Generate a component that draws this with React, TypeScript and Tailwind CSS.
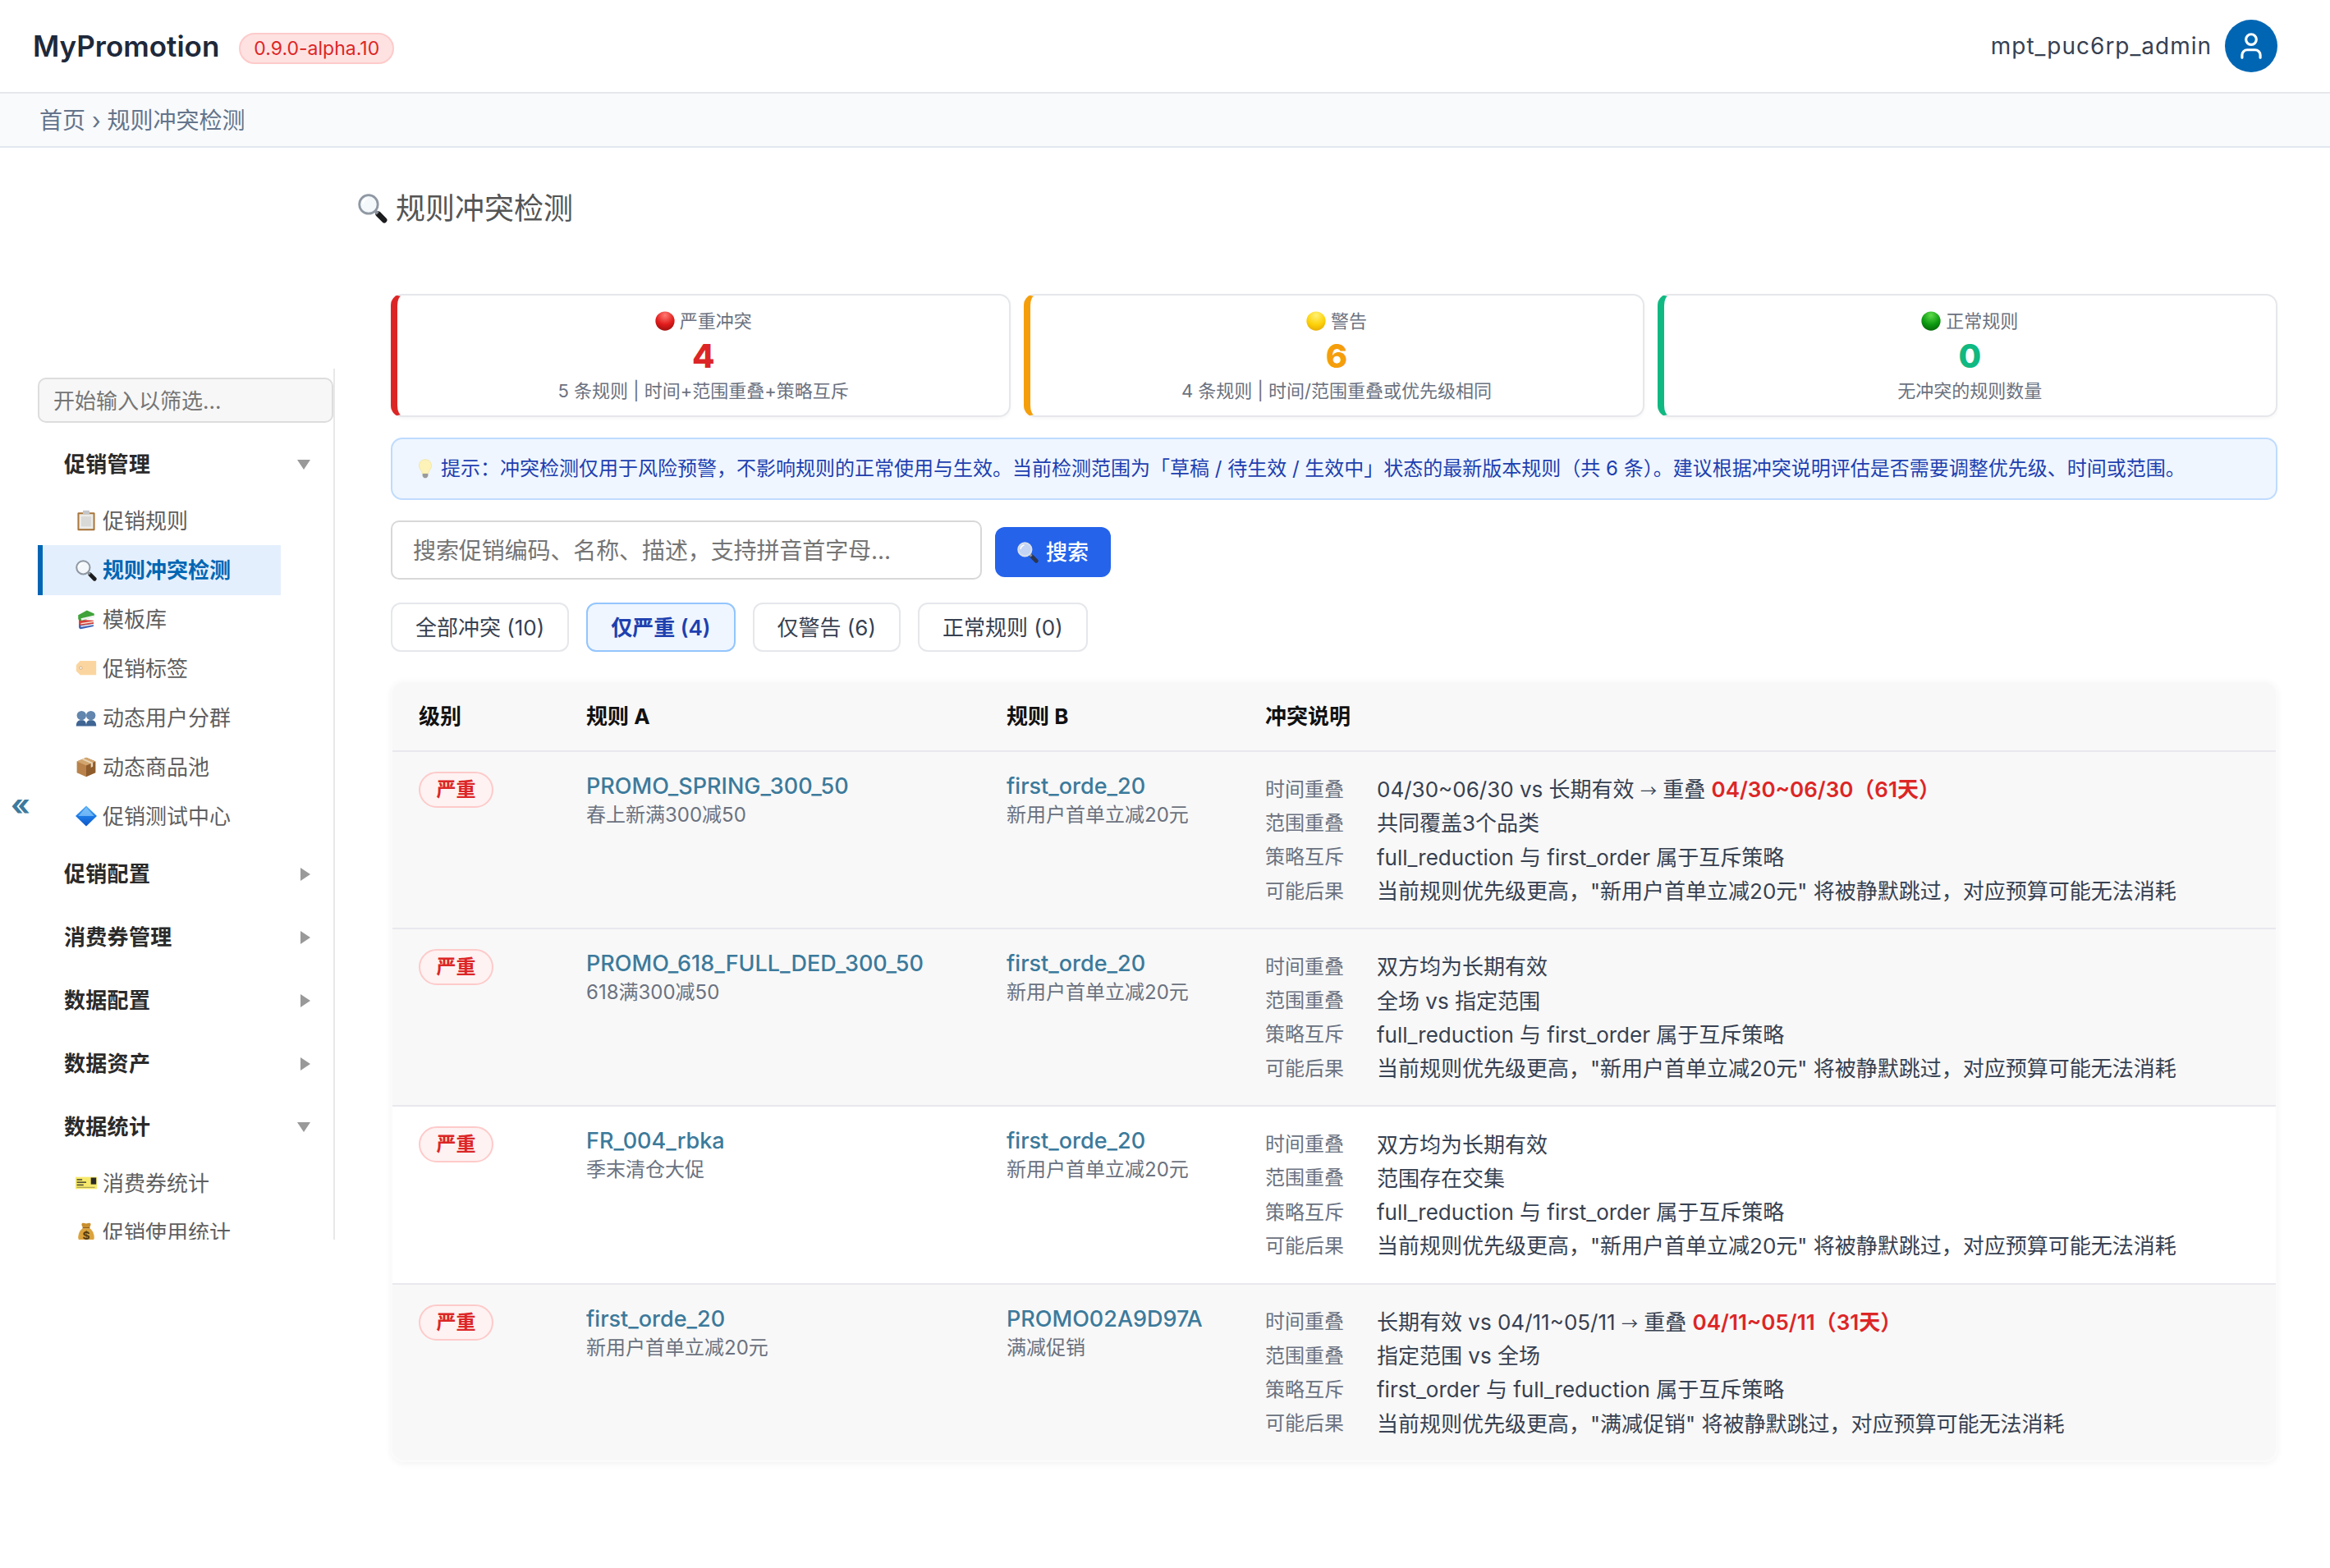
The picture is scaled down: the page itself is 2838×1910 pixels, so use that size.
import React from "react";
import { User } from "lucide-react";

type IconName = "search" | "searchLight" | "clipboard" | "books" | "tag" | "users" | "box" | "diamond" | "ticket" | "bag" | "red" | "yellow" | "green" | "bulb";

function Icon({ name, className }: { name: IconName; className?: string }) {
  const common = { viewBox: "0 0 32 32", className };
  switch (name) {
    case "search":
    case "searchLight":
      return (
        <svg {...common}>
          <path d="M22 22l6.500 6.500" fill="none" stroke={name === "search" ? "#1c1c1e" : "#2b3550"} strokeWidth="6" strokeLinecap="round" />
          <path d="M18 18l3.500 3.500" fill="none" stroke="#8a8f98" strokeWidth="3.500" />
          <circle cx="11.500" cy="11.500" r="10" fill={name === "search" ? "#f4f8fb" : "#c3d4f5"} stroke={name === "search" ? "#8f98a3" : "#d9e0ea"} strokeWidth="2.500" />
          <path d="M5 11a7 7 0 0 1 5.500-6" fill="none" stroke="#fff" strokeWidth="2" />
        </svg>
      );
    case "clipboard":
      return (
        <svg {...common}>
          <rect x="3" y="4" width="26" height="27" rx="1.500" fill="#a9763c" />
          <rect x="5.500" y="6.500" width="21" height="22" fill="#ececea" />
          <rect x="11" y="1" width="10" height="5.500" rx="1" fill="#c2c5c9" />
          <rect x="8.500" y="10" width="15" height="15" fill="#d9d9d7" />
        </svg>
      );
    case "books":
      return (
        <svg {...common}>
          <path d="M5 23l22-2v6L8 31c-2 0-3-1-3-3z" fill="#3c63b8" />
          <path d="M27 23l-19 3v2l19-3z" fill="#f0f0f0" />
          <path d="M5 17l22 1v5L8 25.500c-2 0-3-1.500-3-4z" fill="#d8403a" />
          <path d="M27 19l-19 3v2l19-3z" fill="#f3e6d8" />
          <path d="M4 10L17 3l11 5v4L12 18c-4 1-8 0-8-3z" fill="#3fa33a" />
          <path d="M8 15l20-4.500v3L9 18z" fill="#f3f3f3" />
        </svg>
      );
    case "tag":
      return (
        <svg {...common}>
          <path d="M7 5h24v21H7L1 20v-9z" fill="#fbd5a0" />
          <circle cx="8" cy="15.500" r="2" fill="#fff" stroke="#b98f5c" strokeWidth="0.800" />
        </svg>
      );
    case "users":
      return (
        <svg {...common}>
          <circle cx="9" cy="13" r="7" fill="#6286ad" />
          <path d="M1 29c0-7 3-9 8-9s7 2 7 9z" fill="#3f6594" />
          <circle cx="23" cy="13" r="7" fill="#6286ad" />
          <path d="M16 29c0-7 2-9 7-9s8 2 8 9z" fill="#3f6594" />
        </svg>
      );
    case "box":
      return (
        <svg {...common}>
          <path d="M16 2l14 6v17l-14 6z" fill="#8f5c2c" />
          <path d="M16 2L2 8v17l14 6z" fill="#b8824a" />
          <path d="M16 14L2 8l14-6 14 6z" fill="#d2a56e" />
          <path d="M9 5l14 6.200v6l3-1.400v-6L12 3.800z" fill="#e8d6ba" />
        </svg>
      );
    case "diamond":
      return (
        <svg {...common}>
          <defs>
            <linearGradient id="dg" x1="0" y1="0" x2="0" y2="1">
              <stop offset="0" stopColor="#5bb1f7" />
              <stop offset="0.5" stopColor="#1c7be6" />
              <stop offset="1" stopColor="#0f55c8" />
            </linearGradient>
          </defs>
          <path d="M16 0.500L32 16 16 31.500 0 16z" fill="url(#dg)" />
          <path d="M16 3L4 16h24z" fill="#8ccbfb" opacity="0.700" />
        </svg>
      );
    case "ticket":
      return (
        <svg {...common}>
          <rect x="0" y="7" width="32" height="18" fill="#f6e96a" />
          <rect x="23" y="8" width="8" height="10" fill="#2b2b2b" />
          <rect x="2" y="10" width="8" height="2" fill="#55533a" />
          <rect x="2" y="14" width="14" height="2" fill="#55533a" />
          <rect x="2" y="18" width="10" height="2" fill="#55533a" />
          <rect x="2" y="22" width="27" height="1" fill="#8e8a52" />
        </svg>
      );
    case "bag":
      return (
        <svg {...common}>
          <path d="M11 9C7 2 10 1 16 3c6-2 9-1 5 6z" fill="#c98f2e" />
          <path d="M11 8.500h10l1 2H10z" fill="#8e5e18" />
          <path d="M11 10C6 13 4 19 4 24c0 5 5 7 12 7s12-2 12-7c0-5-2-11-7-14z" fill="#dca33c" />
          <text x="16" y="27" textAnchor="middle" fontSize="17" fontWeight="700" fill="#5b3c10" fontFamily="Inter, sans-serif">$</text>
        </svg>
      );
    case "red":
    case "yellow":
    case "green": {
      const c = { red: ["#ff7b72", "#e01b1b", "#8f0c0c"], yellow: ["#fff176", "#fdd20a", "#e2a300"], green: ["#5edb4a", "#0c9a10", "#045c07"] }[name];
      return (
        <svg {...common}>
          <defs>
            <radialGradient id={"g" + name} cx="0.5" cy="0.2" r="0.9">
              <stop offset="0" stopColor={c[0]} />
              <stop offset="0.55" stopColor={c[1]} />
              <stop offset="1" stopColor={c[2]} />
            </radialGradient>
          </defs>
          <circle cx="16" cy="16" r="15.500" fill={"url(#g" + name + ")"} />
        </svg>
      );
    }
    case "bulb":
      return (
        <svg {...common}>
          <path d="M16 1c-6 0-10 4.500-10 10 0 4 2.500 6.500 4 9 .7 1.200 1 2.500 1 3.500h10c0-1 .3-2.300 1-3.500 1.500-2.500 4-5 4-9 0-5.500-4-10-10-10z" fill="#fdf3b8" stroke="#f0dc8a" strokeWidth="0.800" />
          <path d="M11.500 24h9v4l-2.500 3h-4l-2.500-3z" fill="#9a9a9a" />
        </svg>
      );
  }
}

function Triangle({ open }: { open: boolean }) {
  return open ? (
    <svg viewBox="0 0 16 12" className="w-[16px] h-[12px] ml-auto mr-[28px] shrink-0">
      <path d="M0 0h16L8 12z" fill="#999999" />
    </svg>
  ) : (
    <svg viewBox="0 0 12 16" className="w-[12px] h-[16px] ml-auto mr-[28px] shrink-0">
      <path d="M0 0l12 8-12 8z" fill="#999999" />
    </svg>
  );
}

function Group({ label, open }: { label: string; open: boolean }) {
  return (
    <div className="h-[77px] flex items-center pl-[32px] text-[26px] tracking-[0.3px] font-bold text-[#2a2a2a]">
      <span>{label}</span>
      <Triangle open={open} />
    </div>
  );
}

function Item({ icon, label, active }: { icon: IconName; label: string; active?: boolean }) {
  return (
    <div
      className={
        active
          ? "h-[61px] -mb-px w-[296px] flex items-center border-l-[6px] border-[#0066b3] bg-[#e4effd] pl-[40px] text-[26px] font-bold text-[#0066b3]"
          : "h-[60px] w-[296px] flex items-center pl-[46px] text-[26px] text-[#5f5f5f]"
      }
    >
      <Icon name={icon} className="w-[26px] h-[26px] mr-[7px] shrink-0" />
      <span>{label}</span>
    </div>
  );
}

function Sidebar() {
  return (
    <aside className="w-[408px] shrink-0 pl-[46px] pt-[269px]">
      <div className="h-[1061px] overflow-hidden border-r-2 border-[#e8e8e8] pt-[11px]">
        <input
          placeholder="开始输入以筛选..."
          className="block w-[360px] h-[55px] rounded-[10px] border-2 border-[#dddddd] bg-[#f7f7f7] pl-[17px] pt-[2px] text-[26px] placeholder:text-[#757575] outline-none"
        />
        <div className="mt-[12px]">
          <Group label="促销管理" open />
          <Item icon="clipboard" label="促销规则" />
          <Item icon="search" label="规则冲突检测" active />
          <Item icon="books" label="模板库" />
          <Item icon="tag" label="促销标签" />
          <Item icon="users" label="动态用户分群" />
          <Item icon="box" label="动态商品池" />
          <Item icon="diamond" label="促销测试中心" />
        </div>
        <div className="mt-[2px]">
          <Group label="促销配置" open={false} />
          <Group label="消费券管理" open={false} />
          <Group label="数据配置" open={false} />
          <Group label="数据资产" open={false} />
          <Group label="数据统计" open />
          <Item icon="ticket" label="消费券统计" />
          <Item icon="bag" label="促销使用统计" />
        </div>
      </div>
    </aside>
  );
}

const statCards: { icon: IconName; label: string; value: string; sub: string; border: string; text: string }[] = [
  { icon: "red", label: "严重冲突", value: "4", sub: "5 条规则 | 时间+范围重叠+策略互斥", border: "border-l-[#dc2626]", text: "text-[#dc2626]" },
  { icon: "yellow", label: "警告", value: "6", sub: "4 条规则 | 时间/范围重叠或优先级相同", border: "border-l-[#f59e0b]", text: "text-[#f59e0b]" },
  { icon: "green", label: "正常规则", value: "0", sub: "无冲突的规则数量", border: "border-l-[#10b981]", text: "text-[#10b981]" },
];

function StatCard({ icon, label, value, sub, border, text }: (typeof statCards)[number]) {
  return (
    <div className={"h-[150px] rounded-[14px] border-2 border-l-[8px] border-[#e5e7eb] bg-white pt-[15px] flex flex-col items-center shadow-[0_2px_4px_rgba(0,0,0,0.04)] " + border}>
      <div className="h-[32px] flex items-center gap-[6px] text-[22px] leading-[32px] text-[#6b7280]">
        <Icon name={icon} className="w-[24px] h-[24px]" />
        <span>{label}</span>
      </div>
      <div className={"mt-[3px] h-[48px] text-[40px] leading-[48px] font-extrabold " + text}>{value}</div>
      <div className="mt-[2px] h-[32px] text-[22px] leading-[32px] text-[#6b7280]">{sub}</div>
    </div>
  );
}

const chips = [
  { label: "全部冲突 (10)" },
  { label: "仅严重 (4)", active: true },
  { label: "仅警告 (6)" },
  { label: "正常规则 (0)" },
];

const longBudget = "当前规则优先级更高，\"新用户首单立减20元\" 将被静默跳过，对应预算可能无法消耗";
const mutex = "full_reduction 与 first_order 属于互斥策略";

type Row = {
  a: string;
  aSub: string;
  b: string;
  bSub: string;
  white?: boolean;
  lines: React.ReactNode[];
};

const arrow = <span className="font-['Noto_Sans_CJK_SC'] text-[20px]">→</span>;

const rows: Row[] = [
  {
    a: "PROMO_SPRING_300_50",
    aSub: "春上新满300减50",
    b: "first_orde_20",
    bSub: "新用户首单立减20元",
    lines: [
      <>04/30~06/30 vs 长期有效 {arrow} 重叠 <span className="font-semibold text-[#dc2626]">04/30~06/30（61天）</span></>,
      "共同覆盖3个品类",
      mutex,
      longBudget,
    ],
  },
  {
    a: "PROMO_618_FULL_DED_300_50",
    aSub: "618满300减50",
    b: "first_orde_20",
    bSub: "新用户首单立减20元",
    lines: ["双方均为长期有效", "全场 vs 指定范围", mutex, longBudget],
  },
  {
    a: "FR_004_rbka",
    aSub: "季末清仓大促",
    b: "first_orde_20",
    bSub: "新用户首单立减20元",
    white: true,
    lines: ["双方均为长期有效", "范围存在交集", mutex, longBudget],
  },
  {
    a: "first_orde_20",
    aSub: "新用户首单立减20元",
    b: "PROMO02A9D97A",
    bSub: "满减促销",
    lines: [
      <>长期有效 vs 04/11~05/11 {arrow} 重叠 <span className="font-semibold text-[#dc2626]">04/11~05/11（31天）</span></>,
      "指定范围 vs 全场",
      "first_order 与 full_reduction 属于互斥策略",
      "当前规则优先级更高，\"满减促销\" 将被静默跳过，对应预算可能无法消耗",
    ],
  },
];

const lineLabels = ["时间重叠", "范围重叠", "策略互斥", "可能后果"];

function RuleCell({ name, sub }: { name: string; sub: string }) {
  return (
    <div>
      <div className="mt-[1px] h-[34px] text-[27px] leading-[34px] font-medium text-[#3c7a9b]">{name}</div>
      <div className="mt-[1px] h-[34px] text-[24px] leading-[34px] text-[#6b7280]">{sub}</div>
    </div>
  );
}

function TableRow({ row, last }: { row: Row; last: boolean }) {
  return (
    <div className={"grid grid-cols-[236px_512px_315px_1fr] py-[24px] " + (row.white ? "bg-white " : "bg-[#f8f8f8] ") + (last ? "" : "border-b-2 border-[#e8e8ee]")}>
      <div className="pl-[32px]">
        <span className="flex h-[44px] w-[91px] items-center justify-center rounded-[22px] border-2 border-[#fecaca] bg-[#fef2f2] text-[24px] font-semibold text-[#dc2626]">严重</span>
      </div>
      <RuleCell name={row.a} sub={row.aSub} />
      <RuleCell name={row.b} sub={row.bSub} />
      <div className="pt-[1px]">
        {row.lines.map((line, i) => (
          <div key={i} className="flex h-[41.3px] items-center">
            <span className="w-[136px] shrink-0 text-[24px] text-[#6b7280]">{lineLabels[i]}</span>
            <span className="text-[26px] text-[#374151]">{line}</span>
          </div>
        ))}
      </div>
    </div>
  );
}

export default function App() {
  return (
    <div className="min-h-[1910px] bg-white font-['Inter','Noto_Sans_CJK_SC',sans-serif]">
      <header className="h-[114px] border-b-2 border-[#e5e7eb] flex items-center pl-[40px] pr-[64px]">
        <span className="text-[35px] font-semibold text-[#1e293b]">MyPromotion</span>
        <span className="ml-[24px] mt-[6px] flex h-[38px] items-center rounded-full border-2 border-[#fecaca] bg-[#fee2e2] px-[16px] text-[23px] text-[#dc2626]">0.9.0-alpha.10</span>
        <span className="ml-auto text-[28px] tracking-[1px] text-[#374151]">mpt_puc6rp_admin</span>
        <span className="ml-[16px] flex h-[64px] w-[64px] items-center justify-center rounded-full bg-[#0066b3]">
          <User className="h-[38px] w-[38px] text-white" />
        </span>
      </header>
      <div className="h-[66px] border-b-2 border-[#e2e8f0] bg-[#f8fafc] flex items-center pl-[48px] pt-[2px] text-[28px] text-[#64748b]">首页 › 规则冲突检测</div>
      <div className="relative flex">
        <Sidebar />
        <span className="absolute left-[13px] top-[776px] text-[36px] leading-[48px] font-bold text-[#3d7a9e]">«</span>
        <main className="flex-1 pl-[28px] pr-[64px] pt-[50px]">
          <h1 className="flex h-[48px] items-center gap-[10px] text-[36px] font-normal text-[#555555]">
            <Icon name="search" className="h-[36px] w-[36px]" />
            规则冲突检测
          </h1>
          <div className="ml-[40px] mt-[80px]">
            <div className="grid grid-cols-3 gap-[16px]">
              {statCards.map((c) => (
                <StatCard key={c.label} {...c} />
              ))}
            </div>
            <div className="mt-[25px] flex h-[76px] items-center rounded-[14px] border-2 border-[#bfdbfe] bg-[#eff6ff] pl-[28px] text-[24px] text-[#1e40af]">
              <Icon name="bulb" className="h-[24px] w-[24px] mr-[7px] shrink-0" />
              <span>提示：冲突检测仅用于风险预警，不影响规则的正常使用与生效。当前检测范围为「草稿 / 待生效 / 生效中」状态的最新版本规则（共 6 条）。建议根据冲突说明评估是否需要调整优先级、时间或范围。</span>
            </div>
            <div className="mt-[25px] flex items-start gap-[16px]">
              <input
                placeholder="搜索促销编码、名称、描述，支持拼音首字母..."
                className="h-[72px] w-[720px] rounded-[10px] border-2 border-[#d8d8d8] bg-white pl-[25px] pt-[1px] text-[28px] tracking-[-0.1px] placeholder:text-[#757575] outline-none"
              />
              <button className="mt-[8px] flex h-[61px] w-[141px] items-center justify-center gap-[9px] rounded-[12px] bg-[#2563eb] text-[26px] font-medium text-white">
                <Icon name="searchLight" className="h-[26px] w-[26px]" />
                搜索
              </button>
            </div>
            <div className="mt-[28px] flex gap-[21px]">
              {chips.map((c) => (
                <button
                  key={c.label}
                  className={
                    c.active
                      ? "h-[60px] rounded-[12px] border-2 border-[#93c5fd] bg-[#eff6ff] px-[28px] pt-[1px] text-[26px] font-semibold text-[#1e40af]"
                      : "h-[60px] rounded-[12px] border-2 border-[#e5e7eb] bg-white px-[28px] pt-[1px] text-[26px] text-[#374151]"
                  }
                >
                  {c.label}
                </button>
              ))}
            </div>
            <div className="mt-[35px] overflow-hidden rounded-[16px] border-2 border-[#fbfbfb] shadow-[0_2px_8px_rgba(0,0,0,0.05)]">
              <div className="grid h-[85px] grid-cols-[236px_512px_315px_1fr] items-center border-b-2 border-[#e8e8ee] bg-[#f8f8f8] text-[26px] font-bold text-[#111111]">
                <div className="pl-[32px]">级别</div>
                <div>规则 A</div>
                <div>规则 B</div>
                <div>冲突说明</div>
              </div>
              {rows.map((r, i) => (
                <TableRow key={i} row={r} last={i === rows.length - 1} />
              ))}
            </div>
          </div>
        </main>
      </div>
    </div>
  );
}
